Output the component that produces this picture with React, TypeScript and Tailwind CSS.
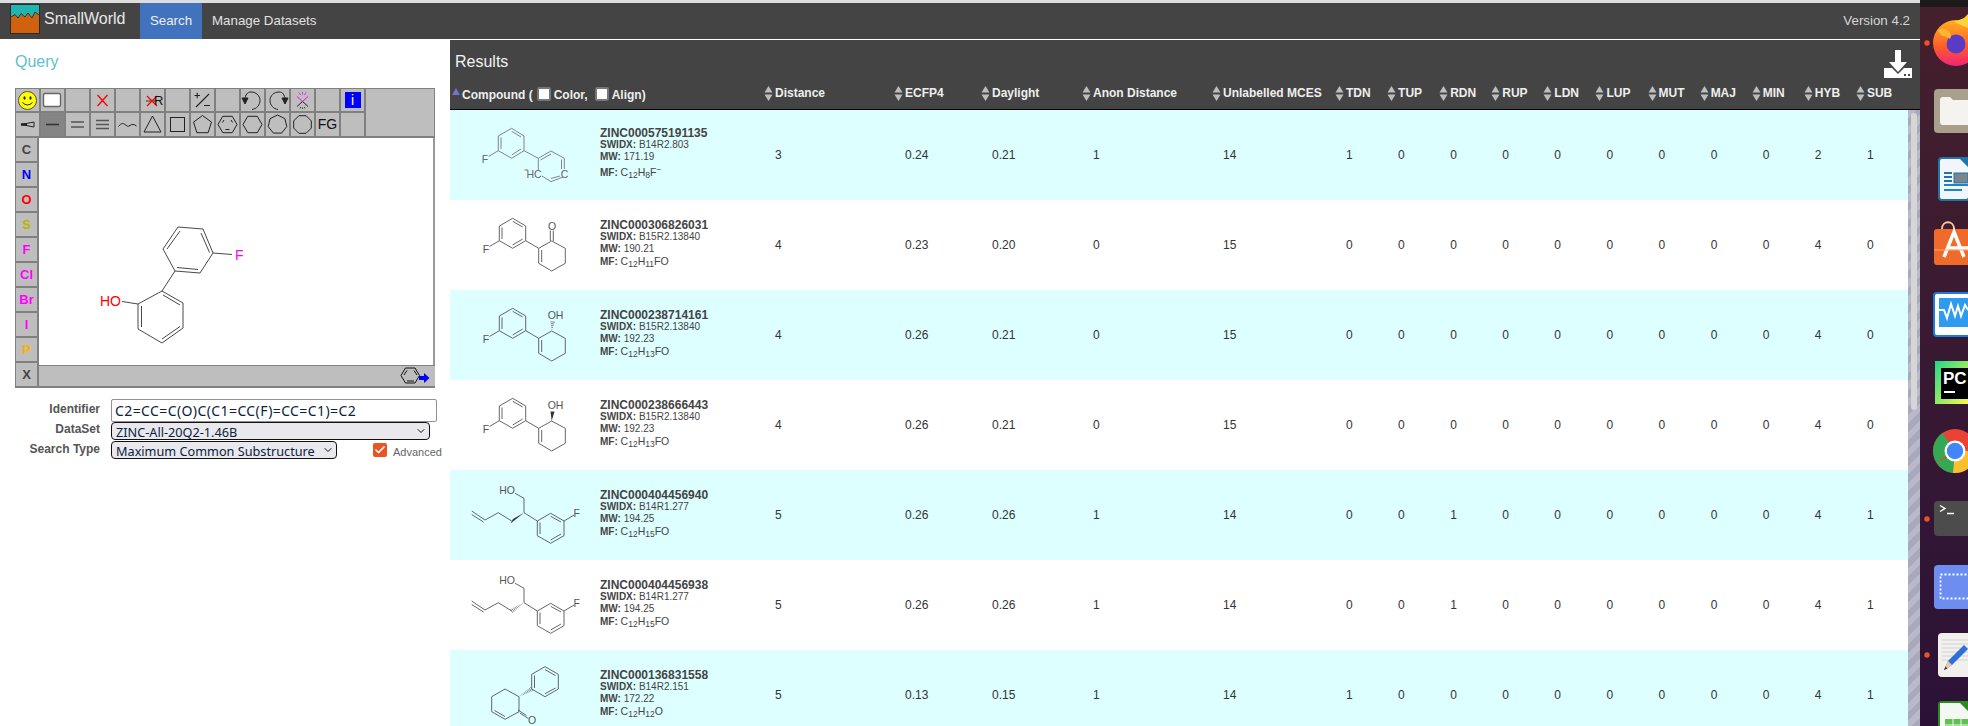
import type { ReactNode } from "react";
import { Check, ChevronDown } from "lucide-react";

// kolom tabel: compound, distance, ecfp4, daylight, anon, mces, lalu 11 kolom kecil
const GRID = "grid grid-cols-[314px_130px_87px_101px_130px_123px_repeat(11,1fr)]";

const SMALL_COLS = ["TDN", "TUP", "RDN", "RUP", "LDN", "LUP", "MUT", "MAJ", "MIN", "HYB", "SUB"];

function Glyph({ children }: { children: ReactNode }) {
  return (
    <svg width="23" height="23" viewBox="0 0 23 23" fill="none" stroke="#222" strokeWidth="1">
      {children}
    </svg>
  );
}

function Cell({ children, active }: { children?: ReactNode; active?: boolean }) {
  return (
    <div className={`flex items-center justify-center overflow-hidden ${active ? "bg-[#858585]" : "bg-[#bebebe]"}`}>
      {children}
    </div>
  );
}

function poly(cx: number, cy: number, r: number, n: number, rot: number) {
  const pts: string[] = [];
  for (let i = 0; i < n; i++) {
    const a = rot + (i * 2 * Math.PI) / n;
    pts.push(`${(cx + r * Math.cos(a)).toFixed(1)},${(cy + r * Math.sin(a)).toFixed(1)}`);
  }
  return pts.join(" ");
}

function Toolbar() {
  return (
    <div className="grid grid-cols-[repeat(14,23px)_1fr] grid-rows-[22px_23px] gap-[2px] p-[1px] pb-[2px] bg-[#808080]">
      <Cell>
        <svg width="23" height="23" viewBox="0 0 23 23">
          <circle cx="11.5" cy="11.5" r="9" fill="#ffff00" stroke="#333" strokeWidth="0.8" />
          <ellipse cx="8.5" cy="9" rx="1.1" ry="1.8" fill="#222" />
          <ellipse cx="14.5" cy="9" rx="1.1" ry="1.8" fill="#222" />
          <path d="M6.5 13.5Q11.5 18.5 16.5 13.5" fill="none" stroke="#222" strokeWidth="1" />
        </svg>
      </Cell>
      <Cell>
        <svg width="23" height="23" viewBox="0 0 23 23">
          <rect x="2.5" y="4.5" width="17" height="13" rx="1.5" fill="#fff" stroke="#666" strokeWidth="1.4" />
        </svg>
      </Cell>
      <Cell />
      <Cell>
        <Glyph>
          <path d="M6.5 6L16.5 17M16.5 6L6.5 17" stroke="#f00" strokeWidth="1.3" />
        </Glyph>
      </Cell>
      <Cell />
      <Cell>
        <svg width="23" height="23" viewBox="0 0 23 23">
          <path d="M5 12H16" stroke="#333" strokeWidth="1" />
          <path d="M6 7L16 17M16 7L6 17" stroke="#f00" strokeWidth="1.3" />
          <text x="13" y="16" fontSize="13" fill="#111" fontFamily="Liberation Sans">R</text>
        </svg>
      </Cell>
      <Cell />
      <Cell>
        <Glyph>
          <path d="M5 18L18 5M3.5 6.5H9M6.2 3.8V9.2M13 16.5H19" strokeWidth="1.1" />
        </Glyph>
      </Cell>
      <Cell />
      <Cell>
        <Glyph>
          <path d="M4 10C4.5 6 6 3 10 3C15 3 19 6.5 19 11.5C19 16 15.5 20 11 20.5" />
          <path d="M1 9L4 15L7 9Z" fill="#222" />
        </Glyph>
      </Cell>
      <Cell>
        <Glyph>
          <path d="M19 10C18.5 6 17 3 13 3C8 3 4 6.5 4 11.5C4 16 7.5 20 12 20.5" />
          <path d="M16 9L19 15L22 9Z" fill="#222" />
        </Glyph>
      </Cell>
      <Cell>
        <Glyph>
          <path d="M6 7.5L11.5 12.5L17 7.5" stroke="#f0f" />
          <path d="M6 17.5L11.5 12.5L17 17.5" />
          <path d="M8 3.5L9.5 6M11.5 3V5.5M15 3.5L13.5 6" stroke="#f0f" strokeWidth="0.8" />
          <path d="M9 19.5L9.8 18M11.5 20V18.5M14 19.5L13.2 18" strokeWidth="0.8" />
        </Glyph>
      </Cell>
      <Cell />
      <Cell>
        <div className="w-[16px] h-[16px] bg-[#0000ff] flex items-center justify-center text-white text-[14px] leading-none">i</div>
      </Cell>
      <div className="row-span-2 bg-[#bebebe]" />

      <Cell>
        <Glyph>
          <path d="M5 11.5L18 9V14Z" fill="#bebebe" stroke="#222" />
          <path d="M5 11.5H11" strokeWidth="2.5" />
        </Glyph>
      </Cell>
      <Cell active>
        <Glyph>
          <path d="M5 11.5H18" stroke="#333" strokeWidth="1.6" />
        </Glyph>
      </Cell>
      <Cell>
        <Glyph>
          <path d="M5 9H18M5 14H18" stroke="#555" strokeWidth="1.6" />
        </Glyph>
      </Cell>
      <Cell>
        <Glyph>
          <path d="M5 7.5H18M5 11.5H18M5 15.5H18" stroke="#555" strokeWidth="1.5" />
        </Glyph>
      </Cell>
      <Cell>
        <Glyph>
          <path d="M2.5 13.5C5 10 7 10 9 11.5C11 13 12 14 14 12.5C16 11 18 11 20.5 13" />
        </Glyph>
      </Cell>
      <Cell>
        <Glyph><polygon points="11.5,3 20,19 3,19" /></Glyph>
      </Cell>
      <Cell>
        <Glyph><rect x="4.5" y="4.5" width="14" height="14" /></Glyph>
      </Cell>
      <Cell>
        <Glyph><polygon points={poly(11.5, 12, 9.5, 5, -Math.PI / 2)} /></Glyph>
      </Cell>
      <Cell>
        <Glyph>
          <polygon points={poly(11.5, 11.5, 9.5, 6, 0)} />
          <path d="M6.5 9.5L8 7M16.5 9.5L15 7M9.5 16.5H13.5" />
        </Glyph>
      </Cell>
      <Cell>
        <Glyph><polygon points={poly(11.5, 11.5, 9.5, 6, 0)} /></Glyph>
      </Cell>
      <Cell>
        <Glyph><polygon points={poly(11.5, 11.5, 9.5, 7, -Math.PI / 2)} /></Glyph>
      </Cell>
      <Cell>
        <Glyph><polygon points={poly(11.5, 11.5, 9.5, 8, Math.PI / 8)} /></Glyph>
      </Cell>
      <Cell>
        <span className="text-[14px] text-[#111]">FG</span>
      </Cell>
      <Cell />
    </div>
  );
}

const ATOMS = [
  { label: "C", color: "text-[#444444]" },
  { label: "N", color: "text-[#0000ff]" },
  { label: "O", color: "text-[#ff0000]" },
  { label: "S", color: "text-[#b5b500]" },
  { label: "F", color: "text-[#ff00ff]" },
  { label: "Cl", color: "text-[#ff00ff]" },
  { label: "Br", color: "text-[#ff00ff]" },
  { label: "I", color: "text-[#ff00ff]" },
  { label: "P", color: "text-[#ffb000]" },
  { label: "X", color: "text-[#444444]" },
];

function QueryMolecule() {
  // koordinat relatif ke kanvas putih
  return (
    <svg width="392" height="227" viewBox="39 137 392 227" fill="none" stroke="#333" strokeWidth="0.9">
      <path d="M178 226L203 228L213 252L200 272L175 270L163 248Z" />
      <path d="M167 248L180 230M201 232L209.5 251.5M177 266.5L198 268.5" />
      <path d="M213 252L232 253.5M175 270L162 290" />
      <path d="M162 290L183 302V327L162 342L138 328V303Z" />
      <path d="M163 294L180 304M180 325.5L162 338M141.5 326V305" />
      <path d="M138 303L122 300.5" />
      <text x="100" y="305" fontSize="14" fill="#ff0000" stroke="none" fontFamily="Liberation Sans">HO</text>
      <text x="235" y="259" fontSize="14" fill="#ff00ff" stroke="none" fontFamily="Liberation Sans">F</text>
    </svg>
  );
}

function Editor() {
  return (
    <div className="w-[420px]">
      <Toolbar />
      <div className="flex">
        <div className="w-[24px] flex flex-col gap-[2px] pl-[1px] pr-[2px] bg-[#808080] h-[250px]">
          {ATOMS.map((a) => (
            <div key={a.label} className={`h-[23px] bg-[#bebebe] flex items-center justify-center text-[13px] font-bold ${a.color}`}>
              {a.label}
            </div>
          ))}
        </div>
        <div className="flex-1 flex flex-col">
          <div className="h-[227px] bg-white border-r-2 border-r-[#999999]">
            <QueryMolecule />
          </div>
          <div className="h-[23px] bg-[#bebebe] border-t border-t-[#808080] border-b-2 border-b-[#808080] flex justify-end items-center pr-[5px]">
            <svg width="30" height="18" viewBox="0 0 30 18" fill="none" stroke="#111" strokeWidth="1">
              <polygon points="1,8.5 5.5,1 15,1 19.5,8.5 15,16 5.5,16" />
              <path d="M4 8L7 3.5M14 3.5L17 8M7 14H14" />
              <path d="M19 9H24V6L29.5 11L24 16V13H19Z" fill="#0000ff" stroke="none" />
            </svg>
          </div>
        </div>
      </div>
    </div>
  );
}

function SelectBox({ value, className }: { value: string; className: string }) {
  return (
    <div className={`relative ${className}`}>
      <select
        defaultValue={value}
        className="appearance-none w-full h-full rounded-[4px] border border-[#111111] bg-[#e9e9ed] pl-[4px] text-[12.7px] font-normal text-[#0b2340] font-['Noto_Sans',sans-serif] outline-none"
      >
        <option>{value}</option>
      </select>
      <ChevronDown className="absolute right-[3px] top-[3px] w-[12px] h-[12px] text-[#111111] pointer-events-none" strokeWidth={2} />
    </div>
  );
}

function QueryPanel() {
  return (
    <aside className="w-[450px] shrink-0 bg-white pl-[15px]">
      <h2 className="h-[49px] pt-[13px] text-[16px] leading-[20px] text-[#62c0c8]">Query</h2>
      <Editor />
      <div className="mt-[11px] -ml-[15px] grid grid-cols-[100px_1fr] gap-x-[11px] text-[12px] font-bold text-[#555555] text-right">
        <div className="h-[23px] leading-[20px]">Identifier</div>
        <input
          readOnly
          value="C2=CC=C(O)C(C1=CC(F)=CC=C1)=C2"
          className="w-[326px] h-[23px] rounded-[2px] border border-[#8f8f9d] bg-white pl-[3px] text-[14px] tracking-[0.4px] font-normal text-[#0b2340] font-['Noto_Sans',sans-serif] outline-none"
        />
        <div className="h-[19px] leading-[15px]">DataSet</div>
        <SelectBox value="ZINC-All-20Q2-1.46B" className="w-[319px] h-[18px] mb-[1px]" />
        <div className="h-[18px] leading-[16px]">Search Type</div>
        <div className="flex text-left">
          <SelectBox value="Maximum Common Substructure" className="w-[226px] h-[18px]" />
          <div className="ml-[36px] mt-[2px] w-[14px] h-[14px] rounded-[2px] bg-[#e95420] flex items-center justify-center">
            <Check className="w-[12px] h-[12px] text-white" strokeWidth={3.5} />
          </div>
          <span className="ml-[6px] mt-[3px] text-[11px] font-normal text-[#666666]">Advanced</span>
        </div>
      </div>
    </aside>
  );
}

function SortArrows() {
  return (
    <svg width="9" height="15" viewBox="0 0 9 15" className="shrink-0">
      <path d="M4.5 0L8.5 6.5H0.5Z" fill="#bdbdbd" />
      <path d="M4.5 15L8.5 8.5H0.5Z" fill="#bdbdbd" />
    </svg>
  );
}

function HeadBox({ className }: { className: string }) {
  return <span className={`block w-[14px] h-[14px] -mt-[3px] bg-white border-2 border-[#777777] rounded-[2px] ${className}`} />;
}

function HeadCell({ label }: { label: string }) {
  return (
    <div className="flex items-center gap-[2px] pb-[5px] whitespace-nowrap">
      <SortArrows />
      <span>{label}</span>
    </div>
  );
}

function ResultsHeader() {
  return (
    <div className="h-[70px] bg-[#444444] border-b border-b-black text-white flex flex-col">
      <div className="h-[42px] flex justify-between pl-[5px] pr-[8px]">
        <h2 className="pt-[12px] text-[16px] leading-[20px] text-[#f2f2f2]">Results</h2>
        <svg width="28" height="28" viewBox="0 0 28 28" className="mt-[10px]" fill="#fff">
          <path d="M11 0H17V12H23L14 22L5 12H11Z" />
          <path d="M0 18H8L14 24L20 18H28V28H0Z" />
          <rect x="20" y="24" width="2" height="2" fill="#444" />
          <rect x="24" y="24" width="2" height="2" fill="#444" />
        </svg>
      </div>
      <div className={`${GRID} flex-1 text-[12px] font-bold text-[#eeeeee] pr-[12px]`}>
        <div className="h-[26px] flex items-center pl-[2px] whitespace-nowrap">
          <svg width="8" height="7" viewBox="0 0 8 7" className="shrink-0 self-start mt-[6px] mr-[2px]">
            <path d="M4 0L8 7H0Z" fill="#7272cf" />
          </svg>
          <span>Compound (</span>
          <HeadBox className="ml-[4px] mr-[3px]" />
          <span>Color,</span>
          <HeadBox className="ml-[7px] mr-[3px]" />
          <span>Align)</span>
        </div>
        <HeadCell label="Distance" />
        <HeadCell label="ECFP4" />
        <HeadCell label="Daylight" />
        <HeadCell label="Anon Distance" />
        <HeadCell label="Unlabelled MCES" />
        {SMALL_COLS.map((c) => (
          <HeadCell key={c} label={c} />
        ))}
      </div>
    </div>
  );
}

function MolSvg({ children }: { children: ReactNode }) {
  return (
    <svg width="150" height="90" viewBox="0 0 150 90" fill="none" stroke="#555" strokeWidth="0.9" className="shrink-0">
      {children}
    </svg>
  );
}

function Lbl({ x, y, children, color }: { x: number; y: number; children: string; color?: string }) {
  return (
    <text x={x} y={y + 3.6} fontSize="10.5" fill={color ?? "#555"} stroke="none" textAnchor="middle" fontFamily="Liberation Sans">
      {children}
    </text>
  );
}

function Hash({ x1, y1, x2, y2 }: { x1: number; y1: number; x2: number; y2: number }) {
  // ikatan putus-putus: garis pendek makin lebar ke arah ujung
  const dx = x2 - x1;
  const dy = y2 - y1;
  const len = Math.hypot(dx, dy);
  const nx = -dy / len;
  const ny = dx / len;
  const n = Math.round(len / 1.7);
  let d = "";
  for (let i = 1; i <= n; i++) {
    const t = i / n;
    const w = 2.2 * t;
    const px = x1 + dx * t;
    const py = y1 + dy * t;
    d += `M${(px - nx * w).toFixed(1)} ${(py - ny * w).toFixed(1)}L${(px + nx * w).toFixed(1)} ${(py + ny * w).toFixed(1)}`;
  }
  return <path d={d} strokeWidth="0.7" />;
}

function FluoroPhenyl() {
  return (
    <>
      <path d="M62.7 18.3L75.7 26V40.7L62.7 48.3L49.3 40.7V26Z" />
      <path d="M62.7 21.3L72.7 27M72.7 39L62.7 45M52 39V27.5" />
      <path d="M49.3 40.7L39.5 46.5M75.7 40.7L88.7 48.3" />
      <Lbl x={36} y={49}>F</Lbl>
    </>
  );
}

function Cyclohexene() {
  return (
    <>
      <path d="M88.7 48.3L101.7 41L115.3 48.3V63.3L101.7 71L88.7 63.3Z" />
      <path d="M91.7 50V62" />
    </>
  );
}

function MolA() {
  return (
    <MolSvg>
      <path d="M61.7 18.3L74 26V40.7L61.7 48.3L48.3 40.7V26Z" stroke="#777" />
      <path d="M61.7 21.3L71 27M71 39L61.7 45M51 39V27.5" stroke="#777" />
      <path d="M48.3 40.7L38.5 46.5M74 40.7L88.3 48.3" stroke="#777" />
      <path d="M88.3 48.3L101 41L114.3 48.3V59M113 67L101 71.7L92 66M88.3 60V48.3" stroke="#777" />
      <path d="M90.5 50L101 44M111.5 49.5V59M110 66L101 68.5" stroke="#777" />
      <Lbl x={35} y={49} color="#666">F</Lbl>
      <Lbl x={84} y={64} color="#666">HC</Lbl>
      <Lbl x={114.5} y={64} color="#666">C</Lbl>
      <path d="M74.5 60H78" stroke="#666" />
    </MolSvg>
  );
}

function MolB() {
  return (
    <MolSvg>
      <FluoroPhenyl />
      <Cyclohexene />
      <path d="M100.3 41V30.5M103.3 41V30.5" />
      <Lbl x={102} y={26}>O</Lbl>
    </MolSvg>
  );
}

function MolC({ solid }: { solid?: boolean }) {
  return (
    <MolSvg>
      <FluoroPhenyl />
      <Cyclohexene />
      {solid ? (
        <path d="M101.7 41L100.5 31.5H104.5Z" fill="#333" stroke="none" />
      ) : (
        <Hash x1={101.7} y1={41} x2={102.7} y2={32} />
      )}
      <Lbl x={105.5} y={25.7}>OH</Lbl>
    </MolSvg>
  );
}

function MolD({ solid }: { solid?: boolean }) {
  return (
    <MolSvg>
      <path d="M21.7 41L35 50L48.3 42.7L61.7 51" />
      <path d="M21.7 44.5L33.5 52" />
      <path d="M74 42.7V28.3L65 23.3M74 42.7L87.3 51" />
      {solid ? (
        <path d="M74 42.7L63 49L60.5 53.5Z" fill="#333" stroke="none" />
      ) : (
        <Hash x1={74} y1={42.7} x2={61.7} y2={51} />
      )}
      <path d="M87.3 51L100.7 43.3L114 51V65.7L100.7 73.3L87.3 65.7Z" />
      <path d="M100.7 46.3L111 52M111 64L100.7 70M90 64V52.5" />
      <path d="M114 51L124 45" />
      <Lbl x={57} y={20}>HO</Lbl>
      <Lbl x={126.7} y={43.3}>F</Lbl>
    </MolSvg>
  );
}

function MolE() {
  return (
    <MolSvg>
      <path d="M95 16.7L108.3 24.3V39L95 46.7L81.7 39V24.3Z" />
      <path d="M95 19.7L105.5 25.5M105.5 38L95 43.7M84.5 38V25.5" />
      <Hash x1={69} y1={46.7} x2={81.7} y2={39} />
      <path d="M69 46.7L55 39L41.7 46.7V61.7L55 69.3L69 61.7Z" />
      <path d="M44.5 60.5L55 66.5" />
      <path d="M68 60L76.5 65.5M69.8 63L78.3 68.5" />
      <Lbl x={82} y={70}>O</Lbl>
    </MolSvg>
  );
}

type Row = {
  id: string;
  swidx: string;
  mw: string;
  mf: ReactNode;
  mol: ReactNode;
  vals: (string | number)[];
};

const f = (sub: string) => <sub className="text-[8.5px]">{sub}</sub>;

const ROWS: Row[] = [
  {
    id: "ZINC000575191135",
    swidx: "B14R2.803",
    mw: "171.19",
    mf: <>C{f("12")}H{f("8")}F<sup className="text-[8.5px]">−</sup></>,
    mol: <MolA />,
    vals: [3, "0.24", "0.21", 1, 14, 1, 0, 0, 0, 0, 0, 0, 0, 0, 2, 1],
  },
  {
    id: "ZINC000306826031",
    swidx: "B15R2.13840",
    mw: "190.21",
    mf: <>C{f("12")}H{f("11")}FO</>,
    mol: <MolB />,
    vals: [4, "0.23", "0.20", 0, 15, 0, 0, 0, 0, 0, 0, 0, 0, 0, 4, 0],
  },
  {
    id: "ZINC000238714161",
    swidx: "B15R2.13840",
    mw: "192.23",
    mf: <>C{f("12")}H{f("13")}FO</>,
    mol: <MolC />,
    vals: [4, "0.26", "0.21", 0, 15, 0, 0, 0, 0, 0, 0, 0, 0, 0, 4, 0],
  },
  {
    id: "ZINC000238666443",
    swidx: "B15R2.13840",
    mw: "192.23",
    mf: <>C{f("12")}H{f("13")}FO</>,
    mol: <MolC solid />,
    vals: [4, "0.26", "0.21", 0, 15, 0, 0, 0, 0, 0, 0, 0, 0, 0, 4, 0],
  },
  {
    id: "ZINC000404456940",
    swidx: "B14R1.277",
    mw: "194.25",
    mf: <>C{f("12")}H{f("15")}FO</>,
    mol: <MolD solid />,
    vals: [5, "0.26", "0.26", 1, 14, 0, 0, 1, 0, 0, 0, 0, 0, 0, 4, 1],
  },
  {
    id: "ZINC000404456938",
    swidx: "B14R1.277",
    mw: "194.25",
    mf: <>C{f("12")}H{f("15")}FO</>,
    mol: <MolD />,
    vals: [5, "0.26", "0.26", 1, 14, 0, 0, 1, 0, 0, 0, 0, 0, 0, 4, 1],
  },
  {
    id: "ZINC000136831558",
    swidx: "B14R2.151",
    mw: "172.22",
    mf: <>C{f("12")}H{f("12")}O</>,
    mol: <MolE />,
    vals: [5, "0.13", "0.15", 1, 14, 1, 0, 0, 0, 0, 0, 0, 0, 0, 4, 1],
  },
];

function ResultRow({ row, index }: { row: Row; index: number }) {
  return (
    <div className={`${GRID} h-[90px] shrink-0 ${index % 2 === 0 ? "bg-[#ddffff]" : "bg-white"}`}>
      <div className="flex">
        {row.mol}
        <div className="flex flex-col justify-center pb-[4px] text-[10px] leading-[12px] text-[#444444]">
          <div className="text-[12px] font-bold">{row.id}</div>
          <div><b>SWIDX:</b> {row.swidx}</div>
          <div><b>MW:</b> {row.mw}</div>
          <div className={index === 0 ? "mt-[3px]" : ""}><b>MF:</b> <span className="text-[10.5px]">{row.mf}</span></div>
        </div>
      </div>
      {row.vals.map((v, i) => (
        <div key={i} className="flex items-center pl-[11px] text-[12px] text-[#333333]">
          {v}
        </div>
      ))}
    </div>
  );
}

function Scrollbar() {
  return (
    <div className="w-[12px] shrink-0 px-[3px] pt-[3px] bg-[repeating-linear-gradient(135deg,#b9b9ca_0,#b9b9ca_6px,#a9a9bd_6px,#a9a9bd_12px)]">
      <div className="h-[297px] rounded-[3px] bg-[#d6d6d6]" />
    </div>
  );
}

function Results() {
  return (
    <section className="flex-1 min-w-0 flex flex-col mt-[1px]">
      <ResultsHeader />
      <div className="flex-1 min-h-0 flex overflow-hidden">
        <div className="flex-1 min-w-0 flex flex-col">
          {ROWS.map((r, i) => (
            <ResultRow key={r.id} row={r} index={i} />
          ))}
        </div>
        <Scrollbar />
      </div>
    </section>
  );
}

function Logo() {
  return (
    <svg width="30" height="30" viewBox="0 0 30 30" className="shrink-0">
      <rect x="0.5" y="0.5" width="29" height="29" fill="#d0610f" stroke="#2a2a2a" />
      <path d="M1 1H29V11L25 8L22 14L18 9L15 13L11 9.5L8 14L5 10.5L1 13Z" fill="#1fb6b0" />
      <path d="M1 13L5 10.5L8 14L11 9.5L15 13L18 9L22 14L25 8L29 11" fill="none" stroke="#333" strokeWidth="1" />
    </svg>
  );
}

function NavBar() {
  return (
    <nav className="h-[36px] bg-[#444444] flex items-stretch text-[#e2e2e2]">
      <div className="w-[140px] pl-[10px] flex items-start pt-[1px]">
        <Logo />
        <span className="ml-[4px] mt-[5px] text-[16px] leading-[20px] text-[#e8e8e8]">SmallWorld</span>
      </div>
      <div className="w-[62px] bg-[#4072bd] flex items-center justify-center text-[13.33px] text-[#eeeeee]">Search</div>
      <div className="ml-[10px] flex items-center text-[13.33px]">Manage Datasets</div>
      <div className="ml-auto pr-[10px] flex items-center text-[13.33px] text-[#d5d5d5]">Version 4.2</div>
    </nav>
  );
}

function Slot({ children, dot }: { children: ReactNode; dot?: boolean }) {
  return (
    <svg width="48" height="68" viewBox="0 0 48 68" className="shrink-0 block">
      {dot && <circle cx="7" cy="35" r="2.7" fill="#e95420" />}
      {children}
    </svg>
  );
}

function Dock() {
  return (
    <aside className="w-[48px] shrink-0 h-[726px] overflow-hidden flex flex-col bg-gradient-to-b from-[#45202c] to-[#2c1137]">
      <div className="h-[8px] shrink-0 border-t-[7px] border-t-[#1d1a1c]" />
      <Slot dot>
        <defs>
          <linearGradient id="fx" x1="0" y1="0" x2="0" y2="1">
            <stop offset="0" stopColor="#ffb020" />
            <stop offset="0.6" stopColor="#ff5a2c" />
            <stop offset="1" stopColor="#f0247a" />
          </linearGradient>
        </defs>
        <circle cx="36" cy="35" r="23" fill="url(#fx)" />
        <path d="M34 14L44 10L48 6V20Z" fill="#ffd43a" />
        <circle cx="36" cy="36" r="9.5" fill="#5a3cc4" />
        <path d="M18 22C24 18 34 24 30 31C27 28 23 29 20 26Z" fill="#ffb52e" />
      </Slot>
      <Slot>
        <rect x="14" y="13" width="44" height="44" rx="4" fill="#a89f8d" />
        <path d="M20 24Q20 21 23 21H30L33 24H48V49H23Q20 49 20 46Z" fill="#f5f3f0" />
      </Slot>
      <Slot>
        <path d="M22 13H48V57H22Q18 57 18 53V17Q18 13 22 13Z" fill="#1f75a8" />
        <rect x="20" y="15" width="28" height="40" rx="2" fill="#f2f6fa" />
        <path d="M38 13L48 23V13Z" fill="#1f75a8" />
        <path d="M24 29H32M24 33H32M24 37H32" stroke="#1f75a8" strokeWidth="2" />
        <path d="M24 41H48M24 46H42" stroke="#1f85c0" strokeWidth="2" />
        <rect x="34" y="29" width="14" height="10" fill="#7a8590" stroke="#1f75a8" />
      </Slot>
      <Slot>
        <path d="M15 17H48V53H17Q14 53 14 50V20Q14 17 17 17Z" fill="#ef6b2b" />
        <path d="M22 17C22 8 34 8 34 17" fill="none" stroke="#f5c8a0" strokeWidth="1.8" />
        <path d="M24 45L34 20L44 45M27 36H48" stroke="#fff" strokeWidth="3.5" fill="none" />
        <path d="M14 38H48" stroke="#f9a678" strokeWidth="1" />
      </Slot>
      <Slot>
        <rect x="13" y="12" width="40" height="45" rx="4" fill="#1a7be0" />
        <rect x="15" y="14" width="38" height="41" rx="2" fill="#fff" />
        <rect x="19" y="18" width="32" height="29" fill="#2e9bf0" />
        <path d="M19 30H24L27 38L31 24L35 36L38 26L41 36L45 25L48 30" fill="none" stroke="#fff" strokeWidth="2" />
      </Slot>
      <Slot>
        <defs>
          <linearGradient id="pc" x1="0" y1="0" x2="1" y2="1">
            <stop offset="0" stopColor="#21d789" />
            <stop offset="1" stopColor="#fcf84a" />
          </linearGradient>
        </defs>
        <rect x="15" y="13" width="33" height="43" fill="url(#pc)" />
        <rect x="21" y="20" width="27" height="31" fill="#000" />
        <text x="23" y="36" fontSize="17" fontWeight="700" fill="#fff" fontFamily="Liberation Sans">PC</text>
        <rect x="24" y="43" width="11" height="2" fill="#fff" />
      </Slot>
      <Slot>
        <circle cx="35" cy="35" r="22" fill="#ea4335" />
        <path d="M35 35L16 46A22 22 0 0 1 22.5 17Z" fill="#34a853" />
        <path d="M16 46A22 22 0 0 0 33 57L44 35Z" fill="#34a853" />
        <path d="M35 35L33 57A22 22 0 0 0 57 35Z" fill="#fbc02d" />
        <circle cx="35" cy="35" r="10.5" fill="#fff" />
        <circle cx="35" cy="35" r="8.2" fill="#4285f4" />
      </Slot>
      <Slot dot>
        <rect x="14" y="17" width="40" height="35" rx="4" fill="#4c4c4c" />
        <path d="M20 21.5L25 24.5L20 27.5" fill="none" stroke="#fff" strokeWidth="1.4" />
        <path d="M27 29.5H34" stroke="#fff" strokeWidth="1.5" />
      </Slot>
      <Slot>
        <rect x="14" y="13" width="44" height="44" rx="4" fill="#6d8ef0" />
        <rect x="20.5" y="22.5" width="40" height="24" fill="none" stroke="#fff" strokeWidth="1.8" strokeDasharray="2 2" />
      </Slot>
      <Slot dot>
        <rect x="18" y="13" width="40" height="44" rx="4" fill="#f1f0ec" />
        <path d="M22 20H48M22 24H48M22 28H48M22 32H48M22 36H48M22 40H48" stroke="#d2d2d2" />
        <path d="M24 50L28 41L44 25L48 29L32 45Z" fill="#2f6fd8" />
        <path d="M24 50L28 41L32 45Z" fill="#f1c9a0" />
        <path d="M24 50L25.5 46.5L27.5 48.5Z" fill="#333" />
      </Slot>
      <Slot>
        <path d="M22 13H48V60H18V17Q18 13 22 13Z" fill="#2c8a1f" />
        <rect x="20" y="15" width="28" height="45" fill="#f4f8f2" />
        <path d="M38 13L48 23V13Z" fill="#2c8a1f" />
        <rect x="25" y="31" width="23" height="17" fill="#5fc14f" />
        <path d="M25 37H48M25 43H48M33 31V48M41 31V48" stroke="#f4f8f2" />
      </Slot>
    </aside>
  );
}

export default function App() {
  return (
    <div className="w-[1968px] h-[726px] overflow-hidden flex bg-white font-['Liberation_Sans',Arial,sans-serif]">
      <div className="w-[1920px] shrink-0 flex flex-col">
        <div className="h-[3px] bg-[#dedede]" />
        <NavBar />
        <main className="flex-1 min-h-0 flex">
          <QueryPanel />
          <Results />
        </main>
      </div>
      <Dock />
    </div>
  );
}
